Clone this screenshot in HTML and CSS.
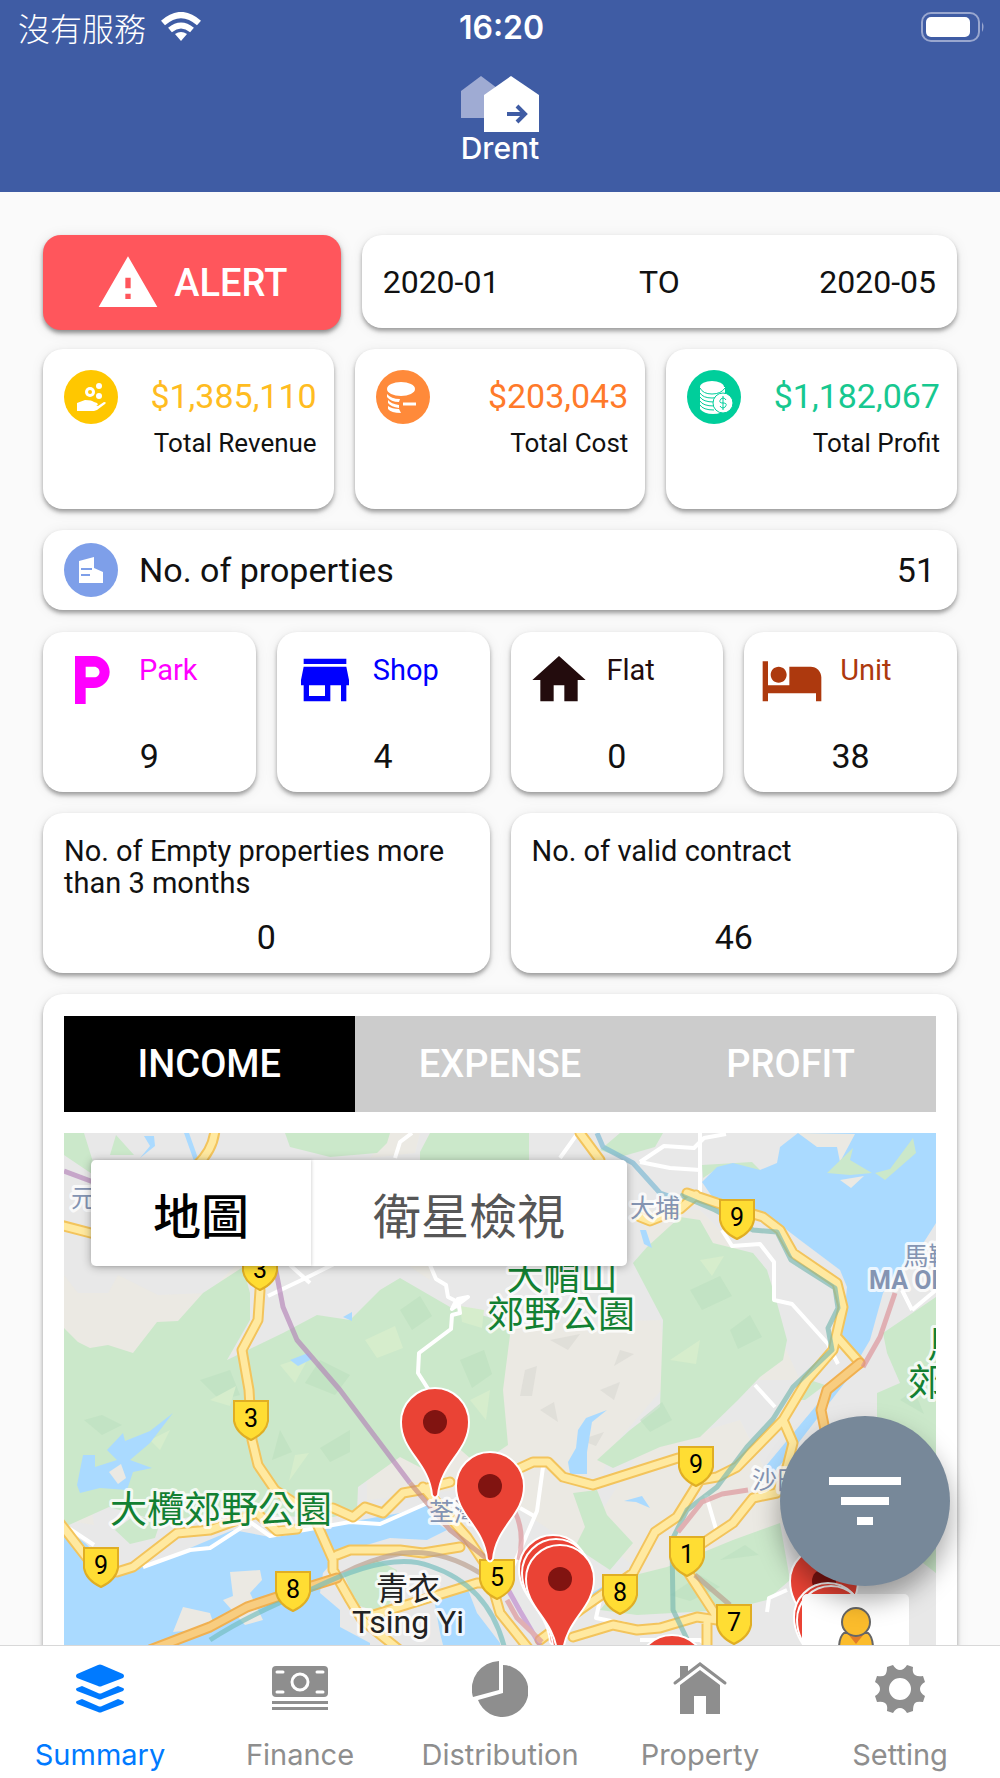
FILE: index.html
```html
<!DOCTYPE html>
<html lang="zh-Hant">
<head>
  <meta charset="UTF-8">
  <meta name="viewport" content="width=device-width, initial-scale=1">
  <title>Drent</title>
  <link rel="stylesheet" href="styles.css">
</head>
<body>
  <div class="app">
    <header class="header">
      <div class="status">
        <div class="carrier">
          <span>沒有服務</span>
          <svg width="40" height="30" viewBox="0 0 40 30" fill="none" stroke="#fff" stroke-width="6">
            <path d="M2 11Q20-5 38 11"/>
            <path d="M9 18Q20 9 31 18"/>
            <path d="M20 29l-6-7q6-4 12 0z" fill="#fff" stroke="none"/>
          </svg>
        </div>
        <time>16:20</time>
        <svg class="battery" width="64" height="30" viewBox="0 0 64 30">
          <rect x="1" y="1" width="57" height="28" rx="9" fill="none" stroke="#99a7cf" stroke-width="2"/>
          <rect x="5" y="5" width="44" height="20" rx="5" fill="#fff"/>
          <path d="M61 10q3 5 0 10z" fill="#99a7cf"/>
        </svg>
      </div>
      <div class="logo">
        <svg width="80" height="56" viewBox="0 0 80 56">
          <path d="M1 15L21 0l20 15v27H1z" fill="#9fabd3"/>
          <path d="M24 19L51 0l28 19v37H24z" fill="#fff"/>
          <path d="M47 38h16M57 30l8 8-8 8" fill="none" stroke="#3f5ca4" stroke-width="4"/>
        </svg>
        <span>Drent</span>
      </div>
    </header>

    <main class="content">
      <div class="row filter-row">
        <button type="button" class="alert">
          <svg width="64" height="64" viewBox="0 0 24 24" fill="#fff"><path d="M1 21h22L12 2 1 21zm12-3h-2v-2h2v2zm0-4h-2v-4h2v4z"/></svg>
          ALERT
        </button>
        <div class="card range">
          <button type="button">2020-01</button>
          <span>TO</span>
          <button type="button">2020-05</button>
        </div>
      </div>

      <div class="row three">
        <div class="card total">
          <svg class="round" viewBox="0 0 54 54">
            <circle cx="27" cy="27" r="27" fill="#ffc700"/>
            <g fill="#fff">
              <circle cx="26" cy="22" r="5"/><circle cx="35" cy="16" r="3"/><circle cx="35" cy="26" r="3"/>
              <path d="M13 33l8-3q7 0 9 2l3 1q2 2-1 3h-4 6l6-4q3 0 1 2l-8 6-3 1H13z"/>
            </g>
            <circle cx="26" cy="22" r="2" fill="#ffc700"/>
          </svg>
          <div>
            <strong class="revenue">$1,385,110</strong>
            <p>Total Revenue</p>
          </div>
        </div>
        <div class="card total">
          <svg class="round" viewBox="0 0 54 54">
            <circle cx="27" cy="27" r="27" fill="#ff8a3a"/>
            <ellipse cx="25" cy="19" rx="14" ry="7" fill="#fff"/>
            <path d="M11 24q4 5 13 5l-1 3q-8 0-12-5zM12 30q3 4 11 5v3q-8-1-11-5zM12 36q4 3 11 3l2 4q-10 0-13-4z" fill="#fff"/>
            <path d="M27 34h13" stroke="#fff" stroke-width="3"/>
          </svg>
          <div>
            <strong class="cost">$203,043</strong>
            <p>Total Cost</p>
          </div>
        </div>
        <div class="card total">
          <svg class="round" viewBox="0 0 54 54">
            <circle cx="27" cy="27" r="27" fill="#00ce9b"/>
            <path d="M13 17v22q4 5 13 5t12-5V17z" fill="#fff"/>
            <ellipse cx="25" cy="17" rx="12" ry="6" fill="#fff"/>
            <path d="M13 18q3 6 12 6t13-6M13 23q3 5 12 5t13-5M13 27q3 5 14 5M13 31q3 5 14 5M13 35q3 5 14 5" fill="none" stroke="#00ce9b"/>
            <circle cx="36" cy="33" r="10" fill="#fff" stroke="#00ce9b"/>
            <path d="M39 30q-1-2-3-2t-3 2.500 3 2.500 3 2.500-3 2.500-3-2M36 26v14" fill="none" stroke="#00ce9b"/>
          </svg>
          <div>
            <strong class="profit">$1,182,067</strong>
            <p>Total Profit</p>
          </div>
        </div>
      </div>

      <div class="card properties">
        <svg class="round" viewBox="0 0 54 54">
          <circle cx="27" cy="27" r="27" fill="#7e9fe9"/>
          <path d="M15 18l15-4v11l9 4v11H15z" fill="#fff"/>
          <path d="M17 26h11M17 32h9" stroke="#7e9fe9" stroke-width="2"/>
        </svg>
        <span>No. of properties</span>
        <b>51</b>
      </div>

      <div class="row four">
        <div class="card kind park">
          <div class="kind-head">
            <svg width="64" height="64" viewBox="0 0 24 24"><path d="M13 3H6v18h4v-6h3c3.31 0 6-2.69 6-6s-2.69-6-6-6zm.2 8H10V7h3.2c1.1 0 2 .9 2 2s-.9 2-2 2z"/></svg>
            <span>Park</span>
          </div>
          <b>9</b>
        </div>
        <div class="card kind shop">
          <div class="kind-head">
            <svg width="64" height="64" viewBox="0 0 24 24"><path d="M20 4H4v2h16V4zm1 10v-2l-1-5H4l-1 5v2h1v6h10v-6h4v6h2v-6h1zm-9 4H6v-4h6v4z"/></svg>
            <span>Shop</span>
          </div>
          <b>4</b>
        </div>
        <div class="card kind flat">
          <div class="kind-head">
            <svg width="64" height="64" viewBox="0 0 24 24"><path d="M10 20v-6h4v6h5v-8h3L12 3 2 12h3v8z"/></svg>
            <span>Flat</span>
          </div>
          <b>0</b>
        </div>
        <div class="card kind unit">
          <div class="kind-head">
            <svg width="64" height="64" viewBox="0 0 24 24"><path d="M7 13c1.66 0 3-1.34 3-3S8.66 7 7 7s-3 1.34-3 3 1.34 3 3 3zm12-6h-8v7H3V5H1v15h2v-3h18v3h2v-9c0-2.21-1.79-4-4-4z"/></svg>
            <span>Unit</span>
          </div>
          <b>38</b>
        </div>
      </div>

      <div class="row two">
        <div class="card count">
          <p>No. of Empty properties more than 3 months</p>
          <b>0</b>
        </div>
        <div class="card count">
          <p>No. of valid contract</p>
          <b>46</b>
        </div>
      </div>

      <div class="card map-card">
        <div class="tabs">
          <button type="button" class="active">INCOME</button>
          <button type="button">EXPENSE</button>
          <button type="button">PROFIT</button>
        </div>
        <div class="map">
          <svg class="map-canvas" viewBox="64 1133 872 560" preserveAspectRatio="xMinYMin slice">
            <defs>
              <path id="shield" d="M-17 0h34v20q-2 12-17 19q-15-7-17-19z" fill="#fd3" stroke="#e0ae24" stroke-width="2"/>
              <g id="pin">
                <path d="M-3 73C-6 40-34 30-34 0a34 34 0 0168 0C34 30 6 40 3 73q-3 5-6 0z" fill="#ea4335" stroke="#fff" stroke-width="2"/>
                <circle r="12" fill="#811411"/>
              </g>
            </defs>

            <!-- land -->
            <rect x="64" y="1133" width="872" height="560" fill="#e8e8e8"/>
            <g fill="#ebe9e3">
              <path d="M64 1275l14 18 30 0 10-18 40 20 50-2 30-30 10 30-15 60-40 20-129-10z"/>
              <path d="M500 1325l160-5 10 60-60 70-30 100-60-40-40-140z"/>
              <path d="M64 1455l20 0 10 70-30-5zM367 1450l30-30 40-30 40 60-20 40-90 10z"/>
              <path d="M240 1490l50-25-10 40zM390 1133h30l-5 20-45 5zM640 1210l60 0 40 40 60 130-120 0z"/>
              <path d="M640 1450l100-30 50 100-140 60-60-50zM400 1160h40l-10 120-30-20z"/>
            </g>
            <g fill="#cbe8ca">
              <path d="M64 1328l14 14 12 6 18-3 25 8 24-31 21-1 25-28 40-26 7 26v27l-23 40 56-27 34-18 33 5 30-30 20-12 50 29 50 13 10 15-7 55 5 55-30 20-23-20-20 30-35-18-42 30-1 25-34 7-60-5-46-2-54 10-54-15-49 22-16-37z"/>
              <path d="M520 1133h9v60h-9zM285 1133l5 14 40 10 47-4 10-10 3-10zM420 1152l10-19h99v27h-109zM600 1150l20-17h43l-8 14-35 10z"/>
              <path d="M680 1217l20 3 13 23 40 10 14 17 10 33 10 37-4 20-23 17-22 23-38 37-40 10-47 21-16-8 33-30 30-23 3-87-30-57 14-16z"/>
              <path d="M936 1297l-53 36 4 20 13 30-23 10v30l20 120 39 30z"/>
              <path d="M573 1493l24-3 10 25 26 28-23 27-35-23 10-20zM600 1610l27-33 40-10 66-27 47-17 10 57-23 20-40 10-90 5z"/>
              <path d="M64 1133h20l14 45-34-23zM110 1155l6-20 18 20z"/>
              <path d="M343 1573l34-13 20 10-10 45-30-10zM115 1530l20-15 25 8-5 15-25 6z"/>
              <path d="M702 1165l50-3 8 8-45 0-12 8zM790 1400l20-20 15 5-20 15z"/>
            </g>
            <g fill="#bde0bf" opacity=".6">
              <path d="M84 1420l18-5 20 10-20 10zM200 1380l30-10 10 25-20 5zM320 1360l30 15-15 20-30-12zM400 1310l20-14 12 20-20 14zM350 1430l-30 18 10 14 20-10zM280 1430l-8 30 20-8z"/>
              <path d="M690 1290l30-14 12 20-30 14zM730 1330l20-15 12 22-24 12zM460 1360l24-10 8 24-20 14zM640 1420l22-18 10 18-22 12zM670 1595l30-20 20 12-30 14zM900 1400l14-10 10 24zM720 1560l25-15 14 10z"/>
            </g>
            <g fill="#d6edcc">
              <path d="M280 1365l30-10-15 28zM365 1340l30-14 8 22-26 10zM460 1306l24 4-2 18-20-6zM210 1400l26-14-6 20zM295 1455l14-2-20 28zM470 1400l20-10-4 30zM700 1260l24-4-12 20zM670 1360l30-20-4 24zM150 1440l20-10-10 20z"/>
            </g>
            <g fill="#dcdad4" opacity=".7">
              <path d="M525 1370l12-4-5 30-12 0zM600 1390l20-8-6 18zM550 1340l30-6-12 16zM540 1410l14-8 4 20zM620 1350l14 4-20 12zM580 1440l24-8-8 14z"/>
            </g>

            <!-- water -->
            <g fill="#aadaff">
              <path d="M798 1133l-18 14-3 16-17 7-27-7-16 4-15 15 11 16 20 9 37 10 30 23 40 30 7 17-4 40-3 10 20 20 10-17 13-47 20-26 14-14 19-30v-90z"/>
              <path d="M64 1528l21 15 32 30 26-6 47-19 43-18 37 7 40-10 40-5 50-9 27-10 6 17 14 10-20 10-37-2-50 15-17 20-3 20 20 17v17l30 16v50H64z"/>
              <path d="M433 1593l34-6 10 26 23 30 5 50h-50l-15-60z"/>
              <path d="M173 1413l-23 30-20 17 22 8-19 4-6 18-27-2-20 5-3-8 6-30 12 0 0 12 22-7-10-10 16-17 2 8 25-10z"/>
              <path d="M607 1410l-15 12-5 30 0 22-17 0-2-12 8-14 2-18 8-12zM624 1501l18-5 8 12-14-6zM640 1230l6 0 6 18-8-4zM343 1317l9-5v9zM290 1360l18-7 4 6-14 7zM140 1158l10-12-6-10 10 0 1 10zM184 1133h5l10 28h-5z"/>
              <path d="M765 1467l50-60 22-27 10 0-58 75-16 18zM565 1610l40-25 0 10-30 20z"/>
            </g>
            <path d="M798 1133l19 14 20 0 3 15 15-28zM840 1180l24-4-13 12z" fill="#ebe9e3"/>
            <path d="M827 1173l26-25-3 12 22 13-22 2zM875 1173l15-4 23-31 3 15-31 27z" fill="#cbe8ca"/>
            <path d="M230 1572l30-2 2 10-12 13 13 27-18 5-22-25 10-4zM183 1607l27 6 5 15-42 4z" fill="#ebe9e3"/>
            <path d="M109 1472l12-8 5 14-8 6z" fill="#ebe9e3"/>

            <!-- minor roads -->
            <g fill="none" stroke="#fff" stroke-width="4" stroke-linejoin="round">
              <path d="M395 1158l5-16 12-9M268 1296l42-20 40-20M290 1265l20 18M430 1265l6 14 10 6 2 12 8 4-4 8 16-12-10 2 2 14-8 2-1 14-32 24-1 20 14 22M560 1158l20-28"/>
              <path d="M700 1133v60M640 1162l30 6 30 2M640 1162l24-16 30 2 10-10 22-4M722 1230l10 16 28-2 14 18 0 38 18 4 36 40 10 20M912 1310l-10-20M912 1310l24-20M755 1385l20 22M543 1467l-6 44-26 60M520 1508l14 8M706 1495l10 34"/>
              <path d="M143 1567l47-17 20-2 40-26 20 14 80-14 30 2 50-22M64 1525l30 20M420 1460l20-6M600 1600l-4 18 30 6M767 1612l2-14 18-8M640 1640h60l30 20"/>
            </g>

            <!-- highways -->
            <g fill="none" stroke-linejoin="round" stroke-linecap="round">
              <g stroke="#f3c45c" stroke-width="11">
                <path d="M215 1130q-2 20-18 35M60 1225l50 13M260 1290l-2 30-16 30 7 40 3 50 6 25 17 25 38 25 20 45 0 10 17 30 12 20 50 40M60 1523l27 35 30 14 16-5 44-34 33-3 47-17 20 18 20-2M333 1508l20 9 12-10 18 6 20-20 17-3 30-8M337 1555l13-5h50l23 3 37-6M370 1616l107-33 20 0M423 1487l44 50 20 30 13 46 40 50M580 1133l20 27"/>
                <path d="M520 1468l13-6h15l15 15 30 8 85-27M540 1640l40-30 53-37 22-41 22-15 23-37 17-3 20-10 46-47 24-40 26-30 10-43-6-24-44-30-13-23-17-13-46-14-30-10M838 1338l22 25M783 1420l10 23-6 24-10 26-24 5-20 25-30 20M680 1560l37 57M573 1637l40-12 24 5 23-2 37-11 20 3M707 1620v50M640 1217l10 4 30-12 16-14"/>
              </g>
              <g stroke="#ffe9a0" stroke-width="7">
                <path d="M215 1130q-2 20-18 35M60 1225l50 13M260 1290l-2 30-16 30 7 40 3 50 6 25 17 25 38 25 20 45 0 10 17 30 12 20 50 40M60 1523l27 35 30 14 16-5 44-34 33-3 47-17 20 18 20-2M333 1508l20 9 12-10 18 6 20-20 17-3 30-8M337 1555l13-5h50l23 3 37-6M370 1616l107-33 20 0M423 1487l44 50 20 30 13 46 40 50M580 1133l20 27"/>
                <path d="M520 1468l13-6h15l15 15 30 8 85-27M540 1640l40-30 53-37 22-41 22-15 23-37 17-3 20-10 46-47 24-40 26-30 10-43-6-24-44-30-13-23-17-13-46-14-30-10M838 1338l22 25M783 1420l10 23-6 24-10 26-24 5-20 25-30 20M680 1560l37 57M573 1637l40-12 24 5 23-2 37-11 20 3M707 1620v50M640 1217l10 4 30-12 16-14"/>
              </g>
              <path d="M860 1363l-33 27-6 20 4 20M150 1650l60-23 37-20 36-12 54-17" stroke="#f0b050" stroke-width="11"/>
              <path d="M860 1363l-33 27-6 20 4 20M150 1650l60-23 37-20 36-12 54-17" stroke="#f8cd80" stroke-width="7"/>
            </g>

            <!-- rail -->
            <g fill="none" stroke-width="5" stroke-linejoin="round" opacity=".65">
              <path d="M64 1171l40 15M275 1266l8 41 14 33 43 50 70 93" stroke="#b483b8"/>
              <path d="M410 1483l40 47 45 35" stroke="#c58a80"/>
              <path d="M500 1575l20 36 20 34" stroke="#bf88cf"/>
              <path d="M597 1133l6 14 30 16 27 30 15 5" stroke="#79b8d4"/>
              <path d="M680 1195l35 15 38 20 24 2 14 28 44 28 3 20-10 20 4 22-39 37-20 32-26 28-30 40-30 23-15 30 1 70 14 29" stroke="#79b8b0"/>
              <path d="M895 1293l-15 44-17 30M748 1490l-26 4-20 8-24 30M515 1512q10 20 4 48M507 1600l10 18 25 24" stroke="#dd9298"/>
              <path d="M695 1575l35 30M340 1575q30-16 62-22 40-4 78 20" stroke="#b99d8c"/>
              <path d="M210 1640q40-26 100-50 80-40 120-24 60 20 75 84" stroke="#71bdbd"/>
            </g>

            <!-- road shields -->
            <g class="road-no">
              <use href="#shield" x="260" y="1251"/><text x="260" y="1278">3</text>
              <use href="#shield" x="737" y="1200"/><text x="737" y="1226">9</text>
              <use href="#shield" x="251" y="1401"/><text x="251" y="1427">3</text>
              <use href="#shield" x="101" y="1548"/><text x="101" y="1574">9</text>
              <use href="#shield" x="293" y="1572"/><text x="293" y="1598">8</text>
              <use href="#shield" x="497" y="1560"/><text x="497" y="1586">5</text>
              <use href="#shield" x="620" y="1575"/><text x="620" y="1601">8</text>
              <use href="#shield" x="696" y="1447"/><text x="696" y="1473">9</text>
              <use href="#shield" x="687" y="1537"/><text x="687" y="1563">1</text>
              <use href="#shield" x="734" y="1605"/><text x="734" y="1631">7</text>
            </g>

            <g class="place park-name">
              <text x="562" y="1290">大帽山</text>
              <text x="561" y="1328">郊野公園</text>
              <text x="221" y="1523">大欖郊野公園</text>
              <text x="946" y="1358">馬</text>
              <text x="945" y="1396">郊野</text>
            </g>
            <g class="place district">
              <text x="96" y="1207">元朗</text>
              <text x="655" y="1217">大埔</text>
              <text x="454" y="1521">荃灣</text>
              <text x="777" y="1489">沙田</text>
              <text x="941" y="1265">馬鞍山</text>
              <text x="946" y="1289" class="latin">MA ON SHAN</text>
            </g>
            <g class="place town">
              <text x="408" y="1600">青衣</text>
              <text x="408" y="1633">Tsing Yi</text>
            </g>

            <!-- property pins -->
            <use href="#pin" x="435" y="1422"/>
            <use href="#pin" x="490" y="1486"/>
            <use href="#pin" x="553" y="1569"/>
            <use href="#pin" x="556" y="1573"/>
            <use href="#pin" x="560" y="1579"/>
            <use href="#pin" x="672" y="1669"/>
            <use href="#pin" x="824" y="1581"/>
            <use href="#pin" x="828" y="1617"/>
            <use href="#pin" x="831" y="1620"/>
          </svg>
          <div class="map-types">
            <button type="button" class="on">地圖</button>
            <button type="button">衛星檢視</button>
          </div>
          <button type="button" class="pegman" aria-label="Street View">
            <svg width="40" height="66" viewBox="0 0 40 66" fill="#fbbc2c" stroke="#666" stroke-width="2">
              <path d="M8 26h24q5 4 5 16l-6 2-2 20H11L9 44l-6-2q0-12 5-16z"/>
              <path d="M12 27h16l-8 10z" fill="#e27c28" stroke="none"/>
              <circle cx="20" cy="15" r="14"/>
            </svg>
          </button>
        </div>
      </div>
    </main>

    <button type="button" class="fab" aria-label="Filter">
      <svg width="96" height="96" viewBox="0 0 24 24" fill="#fff"><path d="M10 18h4v-2h-4v2zM3 6v2h18V6H3zm3 7h12v-2H6v2z"/></svg>
    </button>

    <nav class="tabbar">
      <a href="#summary" class="active">
        <svg width="56" height="56" viewBox="0 0 56 56" fill="currentColor">
          <path d="M26 4q2-1 4 0l21 9q2 2 0 4L30 25q-2 1-4 0L5 17q-2-2 0-4z"/>
          <path d="M5 27l5-2 16 7q2 1 4 0l16-7 5 2q2 1 0 3L30 38q-2 1-4 0L5 30q-2-2 0-3z"/>
          <path d="M5 40l5-2 16 7q2 1 4 0l16-7 5 2q2 1 0 3L30 51q-2 1-4 0L5 43q-2-2 0-3z"/>
        </svg>
        Summary
      </a>
      <a href="#finance">
        <svg width="56" height="56" viewBox="0 0 56 56" fill="currentColor">
          <rect y="5" width="56" height="31" rx="4"/>
          <path d="M0 40h56v3H0zM0 46h56v3H0z"/>
          <circle cx="28" cy="21" r="8" fill="none" stroke="#fff" stroke-width="3"/>
          <path d="M5 11h6M45 11h6M5 31h6M45 31h6" stroke="#fff" stroke-width="3" stroke-linecap="round"/>
        </svg>
        Finance
      </a>
      <a href="#distribution">
        <svg width="56" height="56" viewBox="0 0 56 56" fill="currentColor">
          <path d="M27 0v29L1 36A28 28 0 0127 0z"/>
          <path d="M31 4a26 26 0 11-25 35l25-7z"/>
        </svg>
        Distribution
      </a>
      <a href="#property">
        <svg width="56" height="56" viewBox="0 0 56 56" fill="currentColor">
          <path d="M8 53V24L28 9l20 15v29H34V35H22v18z"/>
          <path d="M8 5h8v7l-8 6z"/>
          <path d="M3 22L28 3l25 19" fill="none" stroke="currentColor" stroke-width="3" stroke-linecap="round"/>
        </svg>
        Property
      </a>
      <a href="#setting">
        <svg width="56" height="56" viewBox="0 0 56 56">
          <path d="M21 4q3 5 7 5t7-5l6 2q-1 6 2 8t8 1l2 6q-5 3-5 7t5 7l-2 6q-6-1-8 1t-2 8l-6 2q-3-5-7-5t-7 5l-6-2q1-6-2-8t-8-1l-2-6q5-3 5-7t-5-7l2-6q6 1 8-1t2-8zM28 17a11 11 0 100 22 11 11 0 000-22z" fill="currentColor" fill-rule="evenodd"/>
        </svg>
        Setting
      </a>
    </nav>
  </div>
</body>
</html>
```
FILE: styles.css
```css
* {
  box-sizing: border-box;
}
body {
  margin: 0;
  background: #fafafa;
  color: #111;
  font-family: Roboto, "Noto Sans CJK TC", sans-serif;
}
svg {
  display: block;
  flex-shrink: 0;
}
p {
  margin: 0;
}
b,
strong {
  font-weight: 400;
}
button {
  margin: 0;
  padding: 0;
  border: 0;
  background: none;
  color: inherit;
  font: inherit;
  cursor: pointer;
}
.app {
  position: relative;
  display: flex;
  flex-direction: column;
  height: 100vh;
}

/* header */
.header {
  background: #3f5ca4;
  color: #fff;
  padding-bottom: 28px;
}
.status {
  display: grid;
  grid-template-columns: 1fr auto 1fr;
  align-items: center;
  height: 54px;
  padding: 0 15px 0 18px;
  font-size: 32px;
}
.carrier {
  display: flex;
  align-items: center;
  gap: 15px;
  font-family: "Noto Sans CJK TC", sans-serif;
  font-weight: 300;
}
.status time {
  font-family: Inter, sans-serif;
  font-weight: 600;
}
.battery {
  justify-self: end;
}
.logo {
  display: flex;
  flex-direction: column;
  align-items: center;
  padding-top: 22px;
  font-family: Inter, sans-serif;
  font-size: 30px;
  font-weight: 500;
  line-height: 32px;
}

/* content */
.content {
  flex: 1;
  min-height: 0;
  overflow-y: auto;
  scrollbar-width: none;
  padding: 43px;
}
.card {
  background: #fff;
  border-radius: 20px;
  box-shadow: 0 3px 4px rgba(0, 0, 0, 0.35), 0 2px 14px rgba(0, 0, 0, 0.08);
}
.row {
  display: grid;
  gap: 21px;
  margin-bottom: 21px;
}
.two {
  grid-template-columns: repeat(2, 1fr);
}
.three {
  grid-template-columns: repeat(3, 1fr);
}
.four {
  grid-template-columns: repeat(4, 1fr);
}
.filter-row {
  grid-template-columns: 1fr 2fr;
  align-items: start;
  margin-bottom: 19px;
}
.alert {
  display: flex;
  align-items: center;
  justify-content: center;
  gap: 14px;
  height: 95px;
  border-radius: 18px;
  background: #ff565c;
  color: #fff;
  font-size: 38px;
  font-weight: 500;
  box-shadow: 0 3px 4px rgba(0, 0, 0, 0.4), 0 2px 14px rgba(0, 0, 0, 0.1);
}
.range {
  display: flex;
  align-items: center;
  justify-content: space-between;
  height: 93px;
  padding: 0 21px;
  font-size: 32px;
}
.round {
  width: 54px;
  height: 54px;
}
.total {
  display: flex;
  justify-content: space-between;
  height: 160px;
  padding: 21px 17px 21px 21px;
  text-align: right;
  font-size: 26px;
  line-height: 42px;
}
.total strong {
  display: block;
  font-size: 34px;
  line-height: 52px;
}
.revenue {
  color: #ffbc21;
}
.cost {
  color: #ff7a2a;
}
.profit {
  color: #17c890;
}
.properties {
  display: flex;
  align-items: center;
  gap: 21px;
  height: 80px;
  margin-bottom: 22px;
  padding: 0 22px 0 21px;
  font-size: 34px;
}
.properties b {
  margin-left: auto;
}
.kind {
  height: 160px;
  padding: 16px;
}
.kind-head {
  display: flex;
  gap: 16px;
  font-size: 29px;
  line-height: 44px;
}
.kind svg {
  fill: currentColor;
}
.kind b,
.count b {
  display: block;
  text-align: center;
  font-size: 34px;
  line-height: 40px;
}
.kind b {
  margin-top: 24px;
}
.park .kind-head {
  color: #f0f;
}
.shop .kind-head {
  color: #00f;
}
.flat .kind-head {
  color: #230c0d;
}
.unit .kind-head {
  color: #ad390e;
}
.count {
  display: flex;
  flex-direction: column;
  justify-content: space-between;
  height: 160px;
  padding: 22px 21px 16px;
}
.count p {
  font-size: 29px;
  line-height: 32px;
}

/* map */
.map-card {
  padding: 22px 21px;
}
.tabs {
  display: grid;
  grid-template-columns: repeat(3, 1fr);
  margin-bottom: 21px;
  background: #ccc;
}
.tabs button {
  height: 96px;
  color: #fff;
  font-size: 38px;
  font-weight: 500;
}
.tabs .active {
  background: #000;
}
.map {
  position: relative;
  overflow: hidden;
}
.map-canvas {
  width: 100%;
}
.map-types {
  position: absolute;
  top: 27px;
  left: 27px;
  display: flex;
  border-radius: 5px;
  background: #fff;
  box-shadow: 0 1px 10px rgba(0, 0, 0, 0.3);
}
.map-types button {
  height: 106px;
  padding: 0 62px;
  color: #565656;
  font-family: "Noto Sans CJK TC", sans-serif;
  font-size: 48px;
}
.map-types .on {
  color: #000;
  font-weight: 500;
  box-shadow: 1px 0 3px rgba(0, 0, 0, 0.15);
}
.pegman {
  position: absolute;
  top: 461px;
  right: 27px;
  display: flex;
  justify-content: center;
  width: 107px;
  height: 99px;
  padding-top: 13px;
  border-radius: 5px;
  background: #fff;
}
.road-no {
  font-size: 25px;
  text-anchor: middle;
}
.place {
  text-anchor: middle;
  paint-order: stroke;
  stroke: rgba(255, 255, 255, 0.8);
  stroke-width: 6px;
  stroke-linejoin: round;
}
.park-name {
  fill: #128032;
  font-size: 37px;
}
.district {
  fill: #8494b2;
  font-size: 25px;
}
.latin {
  font-weight: 700;
}
.town {
  fill: #222;
  font-size: 32px;
}
.fab {
  position: absolute;
  right: 50px;
  bottom: 192px;
  display: grid;
  place-items: center;
  width: 170px;
  height: 170px;
  border-radius: 50%;
  background: #789;
  box-shadow: 0 14px 26px rgba(0, 0, 0, 0.35);
}

/* tab bar */
.tabbar {
  position: relative;
  display: grid;
  grid-template-columns: repeat(5, 1fr);
  height: 133px;
  border-top: 1px solid #d8d8d8;
  background: #fff;
}
.tabbar a {
  display: flex;
  flex-direction: column;
  align-items: center;
  gap: 20px;
  padding-top: 15px;
  color: #8e8e8e;
  font-family: Inter, sans-serif;
  font-size: 29px;
  line-height: 36px;
  text-decoration: none;
}
.tabbar .active {
  color: #007aff;
}
```
